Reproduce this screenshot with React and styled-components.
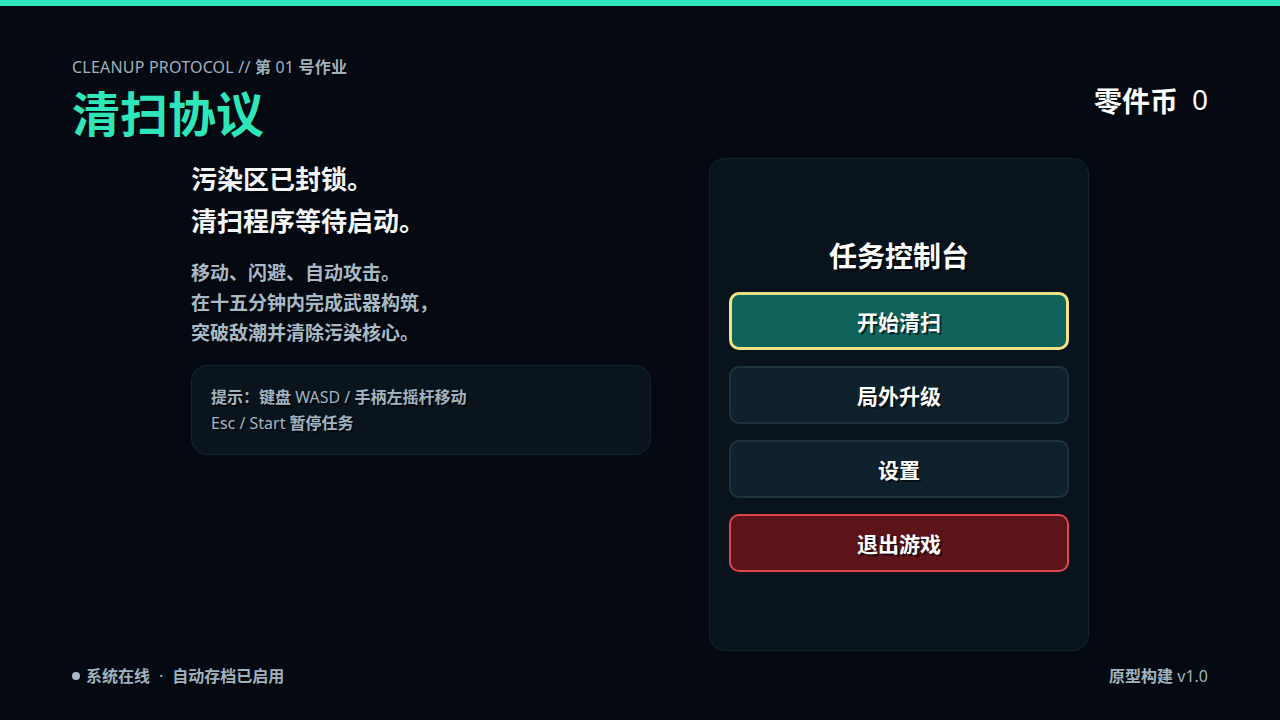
import React from "react";
import styled, { createGlobalStyle } from "styled-components";

const GlobalStyle = createGlobalStyle`
    html, body {
        margin: 0;
        padding: 0;
        background: #050a12;
    }
    body {
        font-family: "Noto Sans", "Noto Sans CJK SC", sans-serif;
        color: #f2f6f8;
    }
    * {
        box-sizing: border-box;
    }
`;

const Screen = styled.div`
    height: 720px;
    display: flex;
    flex-direction: column;
    border-top: 6px solid #2de6ba;
    padding: 50px 72px 33px;
    text-shadow: 2px 2px 0 rgba(0, 0, 0, 0.6);
`;

// latin runs inside bold CJK copy stay regular weight
const Latin = styled.span`
    font-weight: 400;
`;

const Header = styled.header`
    display: flex;
    justify-content: space-between;
    align-items: center;
`;

const Brand = styled.div`
    display: flex;
    flex-direction: column;
    gap: 6px;
`;

const Kicker = styled.div`
    font-size: 16px;
    font-weight: 700;
    line-height: 22px;
    letter-spacing: 0.2px;
    color: #9fb2bf;
`;

const Title = styled.h1`
    margin: 0;
    font-size: 48px;
    line-height: 60px;
    font-weight: 700;
    color: #2ee6b9;
`;

const Coins = styled.div`
    font-size: 28px;
    font-weight: 700;
    color: #ffffff;
    display: flex;
    gap: 14px;
`;

const Main = styled.main`
    flex: 1;
    align-self: center;
    display: grid;
    grid-template-columns: 460px 380px;
    gap: 58px;
    margin-top: 14px;
    margin-bottom: 14px;
`;

const Intro = styled.section`
    display: flex;
    flex-direction: column;
`;

const Lead = styled.h2`
    margin: 0;
    font-size: 26px;
    line-height: 42px;
    font-weight: 700;
    color: #f4f7f9;
`;

const Body = styled.p`
    margin: 16px 0 0;
    font-size: 19px;
    line-height: 30px;
    font-weight: 700;
    color: #a9bac6;
`;

const HintBox = styled.div`
    margin-top: 17px;
    padding: 18px 19px;
    border-radius: 16px;
    background: #0a141d;
    border: 1px solid #16242f;
    font-size: 16px;
    line-height: 26px;
    font-weight: 700;
    color: #a3b4c0;
`;

const Panel = styled.section`
    border-radius: 16px;
    background: #09131b;
    border: 1px solid #15232d;
    padding: 0 19px 2px;
    display: flex;
    flex-direction: column;
    justify-content: center;
    gap: 16px;
`;

const PanelTitle = styled.h3`
    margin: 0;
    text-align: center;
    font-size: 28px;
    line-height: 40px;
    font-weight: 700;
    color: #ffffff;
`;

const variants = {
    primary: { bg: "#10635a", border: "3px solid #f3e184" },
    normal: { bg: "#0f212c", border: "2px solid #1f323e" },
    danger: { bg: "#5c141a", border: "2px solid #df4750" },
};

const MenuButton = styled.button`
    height: 58px;
    width: 100%;
    border-radius: 10px;
    background: ${(p) => variants[p.$variant].bg};
    border: ${(p) => variants[p.$variant].border};
    color: #ffffff;
    font-family: inherit;
    font-size: 21px;
    font-weight: 700;
    text-shadow: 2px 2px 0 rgba(0, 0, 0, 0.6);
    cursor: pointer;
`;

const Footer = styled.footer`
    display: flex;
    justify-content: space-between;
    align-items: center;
    font-size: 16px;
    line-height: 22px;
    font-weight: 700;
    color: #9fb2bf;
`;

const Status = styled.div`
    display: flex;
    align-items: center;
    gap: 6px;
`;

const Dot = styled.span`
    width: 8px;
    height: 8px;
    border-radius: 50%;
    background: #a9bac6;
    box-shadow: 1px 1px 0 rgba(0, 0, 0, 0.6);
`;

const Sep = styled.span`
    margin: 0 3px;
    font-weight: 400;
`;

export default function App() {
    return (
        <>
            <GlobalStyle />
            <Screen>
                <Header>
                    <Brand>
                        <Kicker>
                            <Latin>CLEANUP PROTOCOL //</Latin> 第 <Latin>01</Latin> 号作业
                        </Kicker>
                        <Title>清扫协议</Title>
                    </Brand>
                    <Coins>
                        零件币 <Latin>0</Latin>
                    </Coins>
                </Header>

                <Main>
                    <Intro>
                        <Lead>
                            污染区已封锁。
                            <br />
                            清扫程序等待启动。
                        </Lead>
                        <Body>
                            移动、闪避、自动攻击。
                            <br />
                            在十五分钟内完成武器构筑，
                            <br />
                            突破敌潮并清除污染核心。
                        </Body>
                        <HintBox>
                            提示：键盘 <Latin>WASD /</Latin> 手柄左摇杆移动
                            <br />
                            <Latin>Esc / Start</Latin> 暂停任务
                        </HintBox>
                    </Intro>

                    <Panel>
                        <PanelTitle>任务控制台</PanelTitle>
                        <MenuButton $variant="primary">开始清扫</MenuButton>
                        <MenuButton $variant="normal">局外升级</MenuButton>
                        <MenuButton $variant="normal">设置</MenuButton>
                        <MenuButton $variant="danger">退出游戏</MenuButton>
                    </Panel>
                </Main>

                <Footer>
                    <Status>
                        <Dot />
                        <span>系统在线</span>
                        <Sep>·</Sep>
                        <span>自动存档已启用</span>
                    </Status>
                    <span>
                        原型构建 <Latin>v1.0</Latin>
                    </span>
                </Footer>
            </Screen>
        </>
    );
}
